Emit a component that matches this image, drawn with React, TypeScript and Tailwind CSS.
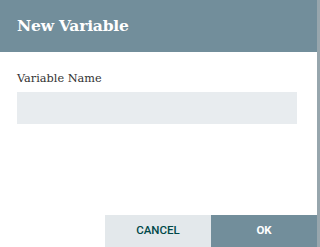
import React from 'react';

export default function App() {
  return (
    <div className="flex h-[247px] w-[320px] bg-[#97a6ad]">
      <div className="flex h-full w-[317px] flex-col bg-white">
        <div className="flex h-[52px] items-center bg-[#728e9b] px-[17px]">
          <h2 className="font-['DejaVu_Serif',serif] text-[15.5px] font-bold tracking-[-0.2px] text-white">New Variable</h2>
        </div>
        <div className="flex flex-1 flex-col px-[17px] pt-[19px]">
          <label className="font-['DejaVu_Serif',serif] text-[11.3px] leading-[16px] text-[#333]">Variable Name</label>
          <div className="mt-[5px] h-[32px] w-[280px] bg-[#e8ecef]" />
        </div>
        <div className="flex h-[32px] justify-end">
          <button className="w-[106px] bg-[#e3e8eb] font-['Roboto',sans-serif] text-[11.5px] font-medium text-[#004849]">
            CANCEL
          </button>
          <button className="w-[106px] bg-[#728e9b] font-['Roboto',sans-serif] text-[11.5px] font-bold text-white">
            OK
          </button>
        </div>
      </div>
    </div>
  );
}
